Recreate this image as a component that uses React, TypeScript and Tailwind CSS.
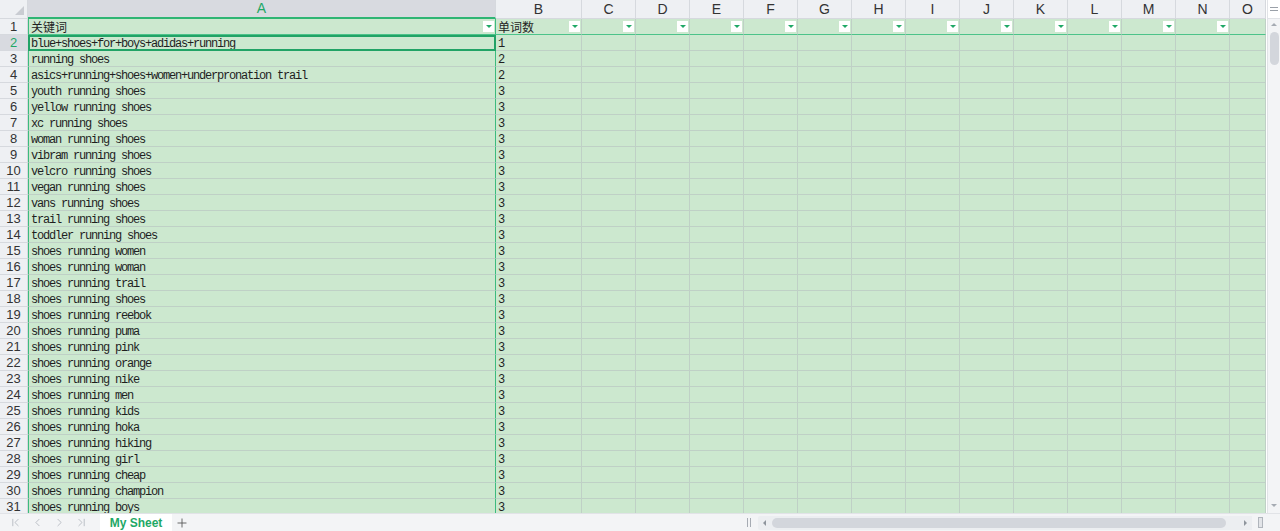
import { ChevronFirst, ChevronLast, ChevronLeft, ChevronRight, Plus } from 'lucide-react';

const cols = [
  { key: 'A', w: 'w-[468px]' },
  { key: 'B', w: 'w-[86px]' },
  { key: 'C', w: 'w-[54px]' },
  { key: 'D', w: 'w-[54px]' },
  { key: 'E', w: 'w-[54px]' },
  { key: 'F', w: 'w-[54px]' },
  { key: 'G', w: 'w-[54px]' },
  { key: 'H', w: 'w-[54px]' },
  { key: 'I', w: 'w-[54px]' },
  { key: 'J', w: 'w-[54px]' },
  { key: 'K', w: 'w-[54px]' },
  { key: 'L', w: 'w-[54px]' },
  { key: 'M', w: 'w-[54px]' },
  { key: 'N', w: 'w-[54px]' },
  { key: 'O', w: 'w-[36px]' },
];

const rows: [string, number][] = [
  ['blue+shoes+for+boys+adidas+running', 1],
  ['running shoes', 2],
  ['asics+running+shoes+women+underpronation trail', 2],
  ['youth running shoes', 3],
  ['yellow running shoes', 3],
  ['xc running shoes', 3],
  ['woman running shoes', 3],
  ['vibram running shoes', 3],
  ['velcro running shoes', 3],
  ['vegan running shoes', 3],
  ['vans running shoes', 3],
  ['trail running shoes', 3],
  ['toddler running shoes', 3],
  ['shoes running women', 3],
  ['shoes running woman', 3],
  ['shoes running trail', 3],
  ['shoes running shoes', 3],
  ['shoes running reebok', 3],
  ['shoes running puma', 3],
  ['shoes running pink', 3],
  ['shoes running orange', 3],
  ['shoes running nike', 3],
  ['shoes running men', 3],
  ['shoes running kids', 3],
  ['shoes running hoka', 3],
  ['shoes running hiking', 3],
  ['shoes running girl', 3],
  ['shoes running cheap', 3],
  ['shoes running champion', 3],
  ['shoes running boys', 3],
];

const mono = "font-['Liberation_Mono','Noto_Sans_CJK_SC',monospace] text-[12px] tracking-[-1.2px] text-[#1f1f1f]";

function FilterBtn() {
  return (
    <div className="ml-auto mr-[1px] flex h-[11px] w-[11px] shrink-0 items-center justify-center bg-white">
      <div className="h-0 w-0 border-x-[3px] border-t-[3px] border-x-transparent border-t-[#1fa866]" />
    </div>
  );
}

function RowHeader({ n, active }: { n: number; active?: boolean }) {
  return (
    <div
      className={`flex h-full w-[28px] shrink-0 items-center justify-center border-r border-b border-[#d6d9de] pt-[1px] font-['Liberation_Sans',sans-serif] text-[13px] ${
        active ? 'bg-[#d8dae0] text-[#1fa866]' : 'bg-[#eef0f3] text-[#333]'
      }`}
    >
      {n}
    </div>
  );
}

export default function App() {
  return (
    <div className="flex h-[531px] w-[1280px] flex-col overflow-hidden bg-white">
      <div className="flex h-[513px] overflow-hidden">
        <div className="flex-1 overflow-hidden">
          {/* column letters */}
          <div className="flex h-[19px]">
            <div className="flex h-full w-[28px] shrink-0 items-end justify-end border-r border-b border-[#d6d9de] bg-[#eef0f3] p-[3px]">
              <div className="h-0 w-0 border-b-[9px] border-l-[9px] border-b-[#c9ccd2] border-l-transparent" />
            </div>
            {cols.map((c) => (
              <div
                key={c.key}
                className={`${c.w} flex h-full shrink-0 items-center justify-center font-['Liberation_Sans',sans-serif] text-[14px] ${
                  c.key === 'A'
                    ? 'border-r border-b-2 border-r-[#d6d9de] border-b-[#2fb574] bg-[#d8dae0] text-[#1fa866]'
                    : 'border-r border-b border-[#d6d9de] bg-[#eef0f3] text-[#333]'
                }`}
              >
                {c.key}
              </div>
            ))}
          </div>

          {/* header row with filters */}
          <div className="flex h-[16px]">
            <RowHeader n={1} />
            {cols.map((c, i) => (
              <div
                key={c.key}
                className={`${c.w} flex h-full shrink-0 items-center border-b border-b-[#4cc38a] bg-[#cce8cf] pl-[2px] ${
                  i === 0 ? 'border-x border-x-[#3dbb7e]' : 'border-r border-r-[#bfd0c6]'
                }`}
              >
                {i === 0 && <span className="pt-[1px] font-['Noto_Sans_CJK_SC',sans-serif] text-[12px] text-[#1f1f1f]">关键词</span>}
                {i === 1 && <span className="pt-[1px] font-['Noto_Sans_CJK_SC',sans-serif] text-[12px] text-[#1f1f1f]">单词数</span>}
                {i < 14 && <FilterBtn />}
              </div>
            ))}
          </div>

          {/* data rows */}
          {rows.map(([kw, count], r) => {
            const active = r === 0;
            return (
              <div key={r} className="flex h-[16px]">
                <RowHeader n={r + 2} active={active} />
                {cols.map((c, i) => {
                  let cls = 'border-r border-b border-[#bfd0c6]';
                  if (i === 0) {
                    cls = active
                      ? 'border-2 border-[#21a366]'
                      : 'border-x border-x-[#3dbb7e] border-b border-b-[#bfd0c6]';
                  }
                  return (
                    <div
                      key={c.key}
                      className={`${c.w} ${cls} flex h-full shrink-0 items-center overflow-hidden whitespace-nowrap bg-[#cce8cf] pt-[2px] ${
                        active && i === 0 ? 'pl-[1px]' : 'pl-[2px]'
                      } ${mono}`}
                    >
                      {i === 0 ? kw : i === 1 ? count : ''}
                    </div>
                  );
                })}
              </div>
            );
          })}
        </div>

        {/* vertical scrollbar */}
        <div className="flex w-[13px] shrink-0 flex-col items-center border-l border-[#e1e3e7] bg-[#f3f4f6]">
          <div className="flex h-[19px] w-full flex-col items-center justify-center gap-[2px] border-b border-[#e1e3e7] bg-white">
            <div className="h-[1px] w-[8px] bg-[#9aa0a8]" />
            <div className="h-[1px] w-[8px] bg-[#9aa0a8]" />
          </div>
          <div className="mt-[4px] h-0 w-0 border-x-[3px] border-b-[3px] border-x-transparent border-b-[#a6abb3]" />
          <div className="mt-[6px] h-[33px] w-[9px] rounded-full bg-[#d3d6dc]" />
          <div className="flex-1" />
          <div className="mb-[6px] h-0 w-0 border-x-[3px] border-t-[3px] border-x-transparent border-t-[#a6abb3]" />
        </div>
      </div>

      {/* sheet tabs + horizontal scrollbar */}
      <div className="flex h-[18px] items-center border-t border-[#e1e3e7] bg-[#f3f4f6]">
        <div className="flex w-[100px] items-center gap-[9px] pl-[9px] text-[#aab0b8]">
          <ChevronFirst size={13} strokeWidth={1.4} />
          <ChevronLeft size={13} strokeWidth={1.4} />
          <ChevronRight size={13} strokeWidth={1.4} />
          <ChevronLast size={13} strokeWidth={1.4} />
        </div>
        <div className="flex h-full w-[72px] items-center justify-center bg-white font-['Liberation_Sans',sans-serif] text-[12px] font-bold text-[#1fa866]">
          My Sheet
        </div>
        <Plus size={14} strokeWidth={1.5} className="ml-[3px] text-[#555]" />
        <div className="flex-1" />
        <div className="mr-[7px] flex gap-[2px]">
          <div className="h-[9px] w-[1px] bg-[#a6abb3]" />
          <div className="h-[9px] w-[1px] bg-[#a6abb3]" />
        </div>
        <div className="flex h-[14px] w-[494px] items-center rounded-l-[2px] bg-[#eceef1] pl-[5px] pr-[5px]">
          <div className="h-0 w-0 border-y-[3px] border-r-[3px] border-y-transparent border-r-[#8f959d]" />
          <div className="ml-[6px] h-[10px] w-[454px] rounded-full bg-[#d3d6dc]" />
          <div className="flex-1" />
          <div className="h-0 w-0 border-y-[3px] border-l-[3px] border-y-transparent border-l-[#8f959d]" />
        </div>
        <div className="ml-[6px] mr-[17px] h-[11px] w-[5px] border border-[#b0b5bc] bg-[#e2e4e8]" />
      </div>
    </div>
  );
}
